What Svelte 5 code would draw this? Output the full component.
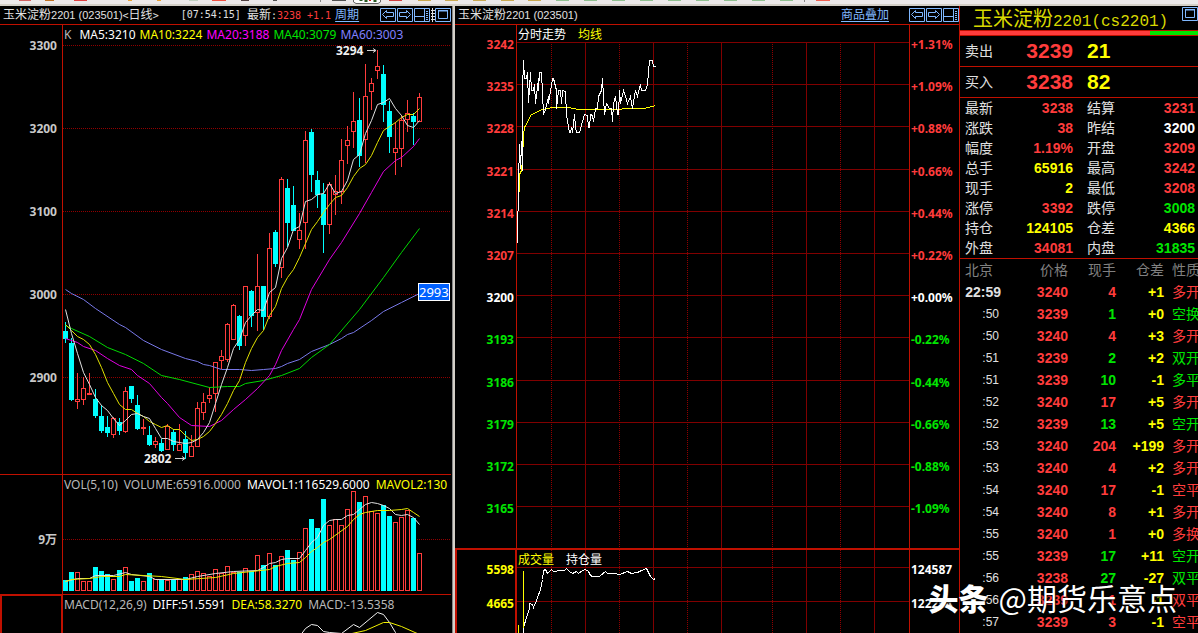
<script>
  const UP = 1
  const DOWN = 0

  // direction, high, body top, body bottom, low, volume top
  const candles = [
    [DOWN, 322, 331, 339, 343, 580], [DOWN, 338, 343, 400, 401, 572], [UP, 373, 399, 401, 409, 572],
    [UP, 377, 388, 399, 405, 581], [UP, 373, 393, 394, 395, 581], [DOWN, 389, 399, 416, 418, 567],
    [DOWN, 405, 416, 431, 433, 571], [DOWN, 416, 427, 433, 437, 574], [UP, 417, 418, 434, 438, 579],
    [DOWN, 418, 422, 431, 435, 570], [UP, 387, 391, 431, 433, 567], [DOWN, 386, 386, 399, 403, 581],
    [DOWN, 395, 405, 429, 430, 578], [UP, 419, 427, 428, 435, 581], [DOWN, 426, 435, 445, 446, 573],
    [UP, 437, 441, 444, 448, 579], [DOWN, 439, 443, 451, 452, 580], [UP, 424, 426, 449, 450, 580],
    [DOWN, 429, 432, 445, 451, 579], [UP, 424, 444, 450, 451, 579], [DOWN, 431, 439, 453, 459, 577],
    [UP, 435, 446, 456, 457, 574], [UP, 402, 408, 446, 447, 571], [UP, 393, 402, 412, 420, 573],
    [UP, 387, 395, 398, 403, 576], [UP, 362, 362, 393, 412, 569], [UP, 350, 356, 360, 369, 573],
    [UP, 323, 324, 359, 362, 566], [UP, 304, 305, 339, 340, 572], [DOWN, 315, 316, 346, 350, 572],
    [UP, 286, 286, 335, 346, 568], [DOWN, 290, 291, 316, 327, 571], [UP, 254, 286, 312, 331, 555],
    [DOWN, 286, 286, 317, 330, 565], [UP, 233, 248, 316, 319, 553], [DOWN, 230, 232, 264, 267, 565],
    [UP, 177, 179, 267, 278, 556], [DOWN, 179, 188, 223, 247, 550], [DOWN, 186, 205, 231, 231, 560],
    [UP, 213, 230, 239, 249, 552], [UP, 131, 140, 222, 249, 528], [DOWN, 129, 132, 175, 192, 519],
    [DOWN, 171, 180, 195, 208, 528], [DOWN, 183, 194, 225, 253, 499], [UP, 182, 184, 224, 234, 525],
    [UP, 175, 191, 194, 215, 519], [UP, 139, 160, 191, 204, 525], [UP, 126, 140, 145, 164, 509],
    [UP, 92, 121, 131, 148, 491], [DOWN, 98, 120, 156, 167, 502], [UP, 64, 96, 139, 163, 496],
    [UP, 78, 83, 91, 110, 511], [UP, 50, 66, 70, 79, 513], [DOWN, 65, 74, 105, 122, 505],
    [DOWN, 101, 111, 137, 153, 516], [UP, 122, 148, 152, 175, 522], [UP, 115, 120, 148, 167, 517],
    [UP, 100, 113, 119, 132, 510], [DOWN, 113, 116, 122, 145, 518], [UP, 93, 97, 121, 122, 553],
  ]

  const every = ys => ys.map((y, i) => [i, y])
  const line = pts => pts.map(([i, y]) => `${i * 6 + 2},${y}`).join(' ')

  const averages = [
    { color: '#7878e8', pts: [[0, 289], [1, 293], [3, 299], [5, 308], [9, 324], [10, 327], [13, 340], [16, 349], [20, 358], [22, 361], [23, 364], [24, 365], [26, 369], [29, 369], [31, 370], [33, 369], [35, 368], [36, 366], [37, 363], [39, 359], [41, 351], [44, 344], [46, 338], [47, 334], [48, 332], [51, 320], [53, 311], [56, 302], [59, 293]] },
    { color: '#00d800', pts: [[0, 325], [1, 328], [4, 336], [7, 347], [10, 354], [13, 363], [16, 375], [19, 379], [24, 387], [27, 386], [29, 386], [30, 383], [33, 380], [36, 375], [39, 368], [41, 357], [44, 344], [49, 309], [53, 277], [56, 252], [59, 228]] },
    { color: '#e000e0', pts: [[0, 338], [2, 342], [3, 346], [5, 350], [7, 358], [9, 365], [11, 369], [12, 375], [14, 383], [16, 397], [17, 403], [19, 417], [21, 425], [24, 426], [26, 420], [28, 409], [30, 399], [32, 388], [34, 375], [35, 364], [36, 350], [38, 329], [39, 319], [41, 289], [44, 259], [46, 242], [49, 213], [51, 192], [53, 171], [55, 160], [56, 157], [58, 146], [59, 138]] },
    { color: '#e0e000', pts: every([324, 330, 336, 339, 344, 354, 367, 382, 393, 404, 409, 409, 413, 416, 421, 424, 427, 425, 429, 429, 435, 440, 439, 436, 431, 423, 414, 403, 390, 380, 362, 348, 337, 330, 315, 306, 288, 277, 269, 257, 243, 229, 221, 212, 204, 197, 195, 187, 176, 168, 164, 155, 142, 130, 126, 122, 117, 114, 114, 108]) },
    { color: '#e0e0e0', pts: every([309, 333, 353, 372, 384, 397, 405, 410, 418, 425, 420, 414, 413, 416, 418, 428, 438, 438, 441, 442, 443, 442, 439, 432, 422, 403, 384, 367, 348, 339, 322, 315, 309, 310, 292, 287, 258, 247, 229, 226, 201, 199, 194, 193, 183, 193, 191, 180, 159, 154, 133, 120, 104, 102, 98, 108, 115, 125, 127, 120]) },
  ]

  const volAverages = [
    { color: '#e0e0e0', pts: [[0, 581], [2, 578], [4, 578], [5, 575], [8, 575], [10, 572], [11, 574], [14, 576], [15, 579], [20, 579], [22, 576], [25, 573], [28, 571], [32, 570], [33, 567], [34, 563], [35, 562], [36, 559], [37, 558], [39, 558], [40, 550], [41, 542], [42, 537], [43, 525], [44, 520], [45, 519], [46, 519], [47, 515], [48, 514], [49, 509], [50, 504], [51, 502], [52, 503], [53, 505], [54, 508], [55, 514], [56, 515], [57, 514], [58, 517], [59, 524]] },
    { color: '#e8e800', pts: [[0, 581], [1, 579], [4, 578], [6, 576], [9, 576], [10, 574], [13, 575], [16, 576], [20, 579], [25, 577], [28, 573], [31, 571], [34, 569], [35, 566], [37, 563], [39, 562], [40, 557], [41, 551], [42, 547], [43, 542], [44, 539], [47, 526], [48, 519], [49, 514], [50, 512], [52, 510], [54, 510], [56, 509], [57, 508], [58, 512], [59, 516]] },
  ]

  const macd = [
    { color: '#f0f0f0', pts: [[39, 636], [40, 628], [41, 624], [42, 625], [43, 631], [44, 632], [46, 633], [48, 624], [49, 627], [52, 612], [53, 614], [54, 622], [55, 632], [56, 638]] },
    { color: '#f0f000', pts: [[47, 634], [50, 630], [53, 622], [54, 622], [56, 626], [59, 634]] },
  ]

  const dayTicks = [[3300, 45], [3200, 128], [3100, 211], [3000, 294], [2900, 377]]

  const minuteTicks = [
    [3242, '+1.31%'], [3235, '+1.09%'], [3228, '+0.88%'], [3221, '+0.66%'],
    [3214, '+0.44%'], [3207, '+0.22%'], [3200, '+0.00%'], [3193, '-0.22%'],
    [3186, '-0.44%'], [3179, '-0.66%'], [3172, '-0.88%'], [3165, '-1.09%'],
  ]
  const side = price => price > 3200 ? 'r' : price < 3200 ? 'g' : 'w'
  const tickY = i => Math.round(i * 42.2)

  // x, dotted
  const hours = [[34, true], [68, false], [102, true], [136, false], [170, true], [204, false], [255, true], [289, false], [323, true], [357, false]]

  const price = '0,200 0,169 1,168 1,121 2,120 2,102 3,126 4,99 5,128 5,48 6,18 7,36 9,36 10,30 11,60 13,30 14,48 16,48 17,42 18,61 21,36 21,48 22,30 24,30 26,72 28,67 31,54 31,61 34,43 35,36 36,36 39,48 39,66 41,48 43,48 44,61 45,48 48,49 49,73 52,90 53,90 54,85 55,90 57,72 58,85 59,90 62,90 65,79 67,72 70,73 71,85 72,85 73,72 75,73 76,79 78,66 80,66 81,54 84,48 85,36 86,54 87,72 89,61 92,66 94,66 95,79 96,61 98,54 100,72 101,72 102,48 103,61 106,48 108,54 110,61 113,54 115,66 118,48 120,54 123,42 124,48 128,48 130,42 132,18 135,18 136,24 138,24'
  const mean = '1,168 2,133 3,129 4,129 5,116 6,93 7,85 10,80 13,73 18,70 25,67 35,65 51,65 61,67 101,67 108,66 126,66 135,64 138,63'
  const openInterest = '6,83 6,77 9,67 12,58 12,53 15,54 16,57 19,50 23,39 25,29 26,20 28,19 30,23 34,19 36,21 43,20 47,20 49,18 52,21 55,23 59,21 61,23 65,20 68,19 71,21 73,25 75,26 82,26 88,21 90,23 96,23 102,24 110,21 114,23 120,22 124,20 129,18 133,26 136,29 138,28'

  const quotes = [
    ['最新', '3238', 'r'], ['结算', '3231', 'r'],
    ['涨跌', '38', 'r'], ['昨结', '3200', 'w'],
    ['幅度', '1.19%', 'r'], ['开盘', '3209', 'r'],
    ['总手', '65916', 'y'], ['最高', '3242', 'r'],
    ['现手', '2', 'y'], ['最低', '3208', 'r'],
    ['涨停', '3392', 'r'], ['跌停', '3008', 'g'],
    ['持仓', '124105', 'y'], ['仓差', '4366', 'y'],
    ['外盘', '34081', 'r'], ['内盘', '31835', 'g'],
  ]

  const trades = [
    ['22:59', 3240, 4, '+1', '多开', 'r'],
    [':50', 3239, 1, '+0', '空换', 'g'],
    [':50', 3240, 4, '+3', '多开', 'r'],
    [':51', 3239, 2, '+2', '双开', 'g'],
    [':51', 3239, 10, '-1', '多平', 'g'],
    [':52', 3240, 17, '+5', '多开', 'r'],
    [':52', 3239, 13, '+5', '空开', 'g'],
    [':53', 3240, 204, '+199', '多开', 'r'],
    [':53', 3240, 4, '+2', '多开', 'r'],
    [':54', 3240, 17, '-1', '空平', 'r'],
    [':54', 3240, 8, '+1', '多开', 'r'],
    [':55', 3240, 1, '+0', '多换', 'r'],
    [':55', 3239, 17, '+11', '空开', 'g'],
    [':56', 3238, 27, '-27', '双平', 'g'],
    [':56', 3239, 1, '-1', '双平', 'r'],
    [':57', 3239, 3, '-1', '空平', 'r'],
  ]

  const sellShare = 80

  // what shows of the toolbar icons: x, width, color
  const stubs = [
    [19, 12, '#d06060'], [45, 9, '#c07020'], [74, 13, '#e04040'], [128, 4, '#e8a030'], [157, 4, '#e8a030'], [189, 9, '#c0d0c0'],
    [212, 14, '#f05040'], [241, 8, '#504040'], [273, 4, '#505050'], [332, 14, '#505050'], [389, 13, '#d04040'], [418, 13, '#c8a850'], [445, 13, '#c8a850'],
    [473, 13, '#c8a850'], [501, 13, '#c8a850'], [528, 13, '#c8a850'], [556, 13, '#90c090'], [584, 13, '#90c090'], [612, 13, '#90c090'],
    [640, 13, '#90c090'], [668, 13, '#90c090'], [696, 13, '#90c090'], [724, 13, '#90c090'], [752, 13, '#90c090'], [780, 13, '#90c090'], [816, 14, '#f06050'],
  ]
</script>

{#snippet icon(kind, label)}
  <button class="icon" aria-label={label}>
    <svg width="16" height="14" viewBox="0 0 16 14" fill="none" stroke="#80b8ff">
      <path d="M.5 .5H15.5V13.5H.5Z" />
      {#if kind === 'left'}
        <path d="M2.5 6.5L6.5 2.5V4.5H13.5V8.5H6.5V10.5Z" />
      {:else if kind === 'right'}
        <path d="M13.5 6.5L9.5 2.5V4.5H2.5V8.5H9.5V10.5Z" />
      {:else if kind === 'split'}
        <path d="M1 8.5H10M10.5 1V13M12 3.5H14M12 5.5H14M12 7.5H14M12 9.5H14M12 11.5H14" />
      {:else}
        <path d="M3.5 3H12.5V10.5H3.5ZM3 2.5H13" />
      {/if}
    </svg>
  </button>
{/snippet}

<div class="app">
  <svg class="strip" width="100%" height="6">
    {#each stubs as [x, w, color]}
      <rect {x} y="0" width={w} height="1" fill={color} />
    {/each}
    <rect x="320" y="0" width="1" height="2" fill="#888" />
    <path d="M353.500 0V2L356 3.500H378L380.500 2V0" fill="#fff" stroke="#666" />
    <path d="M361 0V1M366 0V2M375 0V2" stroke="#2a5a20" stroke-width="3" />
    <path d="M370 0V1" stroke="#d02020" stroke-width="2" />
    <rect x="804" y="0" width="1" height="2" fill="#888" />
  </svg>

  <main>
    <section class="day">
      <header>
        <h2>玉米淀粉<span class="code">2201 (023501)</span><span class="en">&lt;</span>日线<span class="en">&gt;</span></h2>
        <span class="clock">[07:54:15]</span>
        <span>最新<span class="en">:<span class="r">3238 +1.1</span></span></span>
        <a href="#period">周期</a>
        <nav>
          {@render icon('left', '上一个')}
          {@render icon('right', '下一个')}
          {@render icon('split', '分栏')}
          <svg class="mark" width="4" height="14" stroke="#e0e0e0"><path d="M0 2.500H4M0 5.500H4M0 8.500H4M0 11.500H4M1.500 0V14" /></svg>
          {@render icon('max', '最大化')}
        </nav>
      </header>

      <div class="pane">
        <svg class="axis" height="449">
          {#each dayTicks as [label, y]}
            <text x="57" y={y - 20} text-anchor="end">{label}</text>
          {/each}
        </svg>
        <div class="plot">
          <p class="legend num tight">
            <span class="dim">K</span>
            <span class="w lead">MA5:3210</span>
            <span class="y">MA10:3224</span>
            <span class="m">MA20:3188</span>
            <span class="g">MA40:3079</span>
            <span class="b">MA60:3003</span>
          </p>
          <svg width="100%" height="449">
            <g transform="translate(0 -25)" shape-rendering="crispEdges">
              {#each dayTicks as [, y]}
                <line class="dots" x1="0" x2="100%" y1={y + 0.5} y2={y + 0.5} />
              {/each}
              {#each candles as [up, high, top, bottom, low], i}
                <rect class:up class="stick" x={i * 6 + 2} y={high} width="1" height={low - high} />
                {#if up}
                  <rect class="hollow" x={i * 6 + 0.5} y={top + 0.5} width="4" height={bottom - top} />
                {:else}
                  <rect class="stick" x={i * 6} y={top} width="5" height={bottom - top} />
                {/if}
              {/each}
            </g>
            <g transform="translate(0.5 -24.5)">
              {#each averages as a}
                <polyline points={line(a.pts)} stroke={a.color} />
              {/each}
            </g>
            <g class="note">
              <text x="273" y="30">3294</text>
              <path d="M304 25.500H313M310 23.500L313 25.500L310 27.500" />
              <text x="81" y="438">2802</text>
              <path d="M112 433.500H122M119 431.500L122 433.500L119 435.500" />
            </g>
            <rect x="355.500" y="258.500" width="31" height="17" fill="#0060ff" stroke="#fff" />
            <text class="cursor" x="356" y="272">2993</text>
          </svg>
        </div>
      </div>

      <div class="pane">
        <svg class="axis" height="119">
          <text x="57" y="69" text-anchor="end">9万</text>
        </svg>
        <div class="plot">
          <p class="legend num">
            <span class="dim">VOL(5,10)</span>
            <span class="dim">VOLUME:65916.0000</span>
            <span class="w">MAVOL1:116529.6000</span>
            <span class="y">MAVOL2:130</span>
          </p>
          <svg width="100%" height="119">
            <g transform="translate(0 -475)" shape-rendering="crispEdges">
              <line class="dots" x1="0" x2="100%" y1="539.500" y2="539.500" />
              {#each candles as [up, , , , , top], i}
                {#if up}
                  <rect class="hollow" x={i * 6 + 0.5} y={top + 0.5} width="4" height={590 - top} />
                {:else}
                  <rect class="stick" x={i * 6} y={top} width="5" height={591 - top} />
                {/if}
              {/each}
            </g>
            <g transform="translate(0.5 -474.5)">
              {#each volAverages as a}
                <polyline points={line(a.pts)} stroke={a.color} />
              {/each}
            </g>
          </svg>
        </div>
      </div>

      <div class="pane last">
        <div class="axis boxed"></div>
        <div class="plot">
          <p class="legend num">
            <span class="dim">MACD(12,26,9)</span>
            <span class="w">DIFF:51.5591</span>
            <span class="y">DEA:58.3270</span>
            <span class="dim">MACD:-13.5358</span>
          </p>
          <svg width="100%" height="100%">
            <g transform="translate(0.5 -594.5)">
              {#each macd as a}
                <polyline points={line(a.pts)} stroke={a.color} />
              {/each}
            </g>
          </svg>
        </div>
      </div>
    </section>

    <section class="minute">
      <header>
        <h2>玉米淀粉<span class="code">2201 (023501)</span></h2>
        <nav>
          <a href="#overlay">商品叠加</a>
          {@render icon('left', '上一个')}
          {@render icon('right', '下一个')}
          {@render icon('split', '分栏')}
        </nav>
      </header>

      <div class="pane">
        <svg class="axis" height="523">
          {#each minuteTicks as [label], i}
            <text class={side(label)} x="59" y={tickY(i) + 24} text-anchor="end">{label}</text>
          {/each}
        </svg>
        <div class="plot">
          <p class="legend wide"><span class="w">分时走势</span><span class="y">均线</span></p>
          <svg class="under" width="100%" height="506">
            <g shape-rendering="crispEdges">
              {#each minuteTicks as _, i}
                <line class="grid" x1="0" x2="100%" y1={tickY(i) + 0.5} y2={tickY(i) + 0.5} />
              {/each}
              {#each hours as [x, dotted]}
                <line class={dotted ? 'dots' : 'grid'} x1={x + 0.5} x2={x + 0.5} y1="0" y2="100%" />
              {/each}
            </g>
            <g transform="translate(0.5 0.5)" shape-rendering="crispEdges">
              <polyline points={mean} stroke="#ffff00" />
              <polyline points={price} stroke="#ffffff" />
            </g>
          </svg>
        </div>
        <svg class="scale" height="523">
          {#each minuteTicks as [label, pct], i}
            <text class={side(label)} x="1" y={tickY(i) + 24}>{pct}</text>
          {/each}
        </svg>
      </div>

      <div class="pane last thick">
        <svg class="axis boxed">
          <text class="y" x="57" y="24" text-anchor="end">5598</text>
          <text class="y" x="57" y="58" text-anchor="end">4665</text>
        </svg>
        <div class="plot">
          <p class="legend wide"><span class="y">成交量</span><span class="w">持仓量</span></p>
          <svg width="100%" height="100%">
            <g shape-rendering="crispEdges">
              <line class="grid" x1="0" x2="100%" y1="17.500" y2="17.500" />
              <line class="grid" x1="0" x2="100%" y1="51.500" y2="51.500" />
              {#each hours as [x, dotted]}
                <line class={dotted ? 'dots' : 'grid'} x1={x + 0.5} x2={x + 0.5} y1="0" y2="100%" />
              {/each}
            </g>
            <g transform="translate(0.5 0.5)" shape-rendering="crispEdges">
              <polyline points={openInterest} stroke="#ffffff" />
              <path d="M1 74V100M6 20V77" stroke="#ffff00" />
            </g>
          </svg>
        </div>
        <svg class="scale">
          <text class="w" x="1" y="24">124587</text>
          <text class="w" x="1" y="58">122254</text>
        </svg>
      </div>
    </section>

    <aside>
      <div class="title">
        <h1>玉米淀粉<span>2201(cs2201)</span></h1>
        {@render icon('max', '最大化')}
      </div>
      <div class="ratio"><div style="width: {sellShare}%"></div></div>
      <div class="order"><span>卖出</span><b class="r">3239</b><b class="y">21</b></div>
      <div class="order"><span>买入</span><b class="r">3238</b><b class="y">82</b></div>
      <dl>
        {#each quotes as [name, value, color]}
          <div><dt>{name}</dt><dd class={color}>{value}</dd></div>
        {/each}
      </dl>
      <table>
        <thead>
          <tr><th class="time">北京</th><th class="price">价格</th><th class="hand">现手</th><th class="hand">仓差</th><th class="kind">性质</th></tr>
        </thead>
        <tbody>
          {#each trades as [time, price, hand, diff, kind, color], i}
            <tr>
              <td class="time" class:full={i === 0}>{time}</td>
              <td class="r">{price}</td>
              <td class={color}>{hand}</td>
              <td class="y">{diff}</td>
              <td class="kind {color}">{kind}</td>
            </tr>
          {/each}
        </tbody>
      </table>
    </aside>
  </main>

  <div class="watermark"><b>头条</b><span>@期货乐意点</span></div>
</div>

<style>
  :global(body) {
    background: #000;
  }

  .app {
    position: relative;
    display: flex;
    flex-direction: column;
    height: 100vh;
    overflow: hidden;
    color: #e0e0e0;
    font: 12px/18px "Liberation Sans", "Noto Sans CJK SC", sans-serif;
  }

  .strip {
    display: block;
    flex: none;
    background: #ece9ea;
    border-bottom: 2px solid #d4d0c8;
    box-sizing: border-box;
  }

  main {
    flex: 1;
    min-height: 0;
    display: grid;
    grid-template-columns: minmax(0, 455fr) minmax(0, 505fr) 238px;
  }

  section {
    display: flex;
    flex-direction: column;
    min-height: 0;
    box-sizing: border-box;
  }

  .day {
    padding-right: 2px;
    border-right: 2px solid #d4d0c8;
    box-shadow: inset -1px 0 #888;
  }

  .minute {
    border-right: 1px solid #c01000;
  }

  header {
    display: flex;
    align-items: center;
    height: 18px;
    padding-left: 3px;
    border-bottom: 1px solid #c01000;
    white-space: nowrap;
  }

  h1, h2, p, dl, dd {
    margin: 0;
    font-weight: normal;
  }

  h2 {
    font-size: 12px;
  }

  .code {
    font-size: 11px;
  }

  .en, .clock {
    font-family: "DejaVu Sans Mono", monospace;
    font-size: 10px;
  }

  .clock {
    margin: 0 6px 0 22px;
  }

  a {
    color: #80b8ff;
    text-underline-offset: 2px;
  }

  header > a {
    margin-left: 4px;
  }

  nav {
    display: flex;
    align-items: center;
    gap: 1px;
    margin-left: auto;
  }

  nav a {
    margin-right: 19px;
  }

  .icon {
    display: block;
    padding: 0;
    border: 0;
    background: none;
  }

  .icon svg, .mark {
    display: block;
  }

  .mark {
    margin-right: -1px;
  }

  .pane {
    display: flex;
    flex: none;
  }

  .day .pane:not(.last) {
    border-bottom: 1px solid #c01000;
  }

  .last {
    flex: 1;
    min-height: 0;
  }

  .thick {
    border-top: 2px solid #c01000;
  }

  .axis {
    flex: none;
    width: 63px;
    box-sizing: border-box;
    border-right: 1px solid #c01000;
    fill: #c8c8c8;
  }

  .minute .axis {
    width: 62px;
  }

  .axis.boxed {
    border: 2px solid #c01000;
    border-width: 1px 2px 0 2px;
  }

  .thick .axis.boxed {
    border-top: 0;
  }

  .scale {
    flex: none;
    width: 50px;
    box-sizing: border-box;
    border-left: 1px solid #c01000;
  }

  .axis text, .scale text, .note text {
    font: bold 12px "Noto Sans", "Noto Sans CJK SC", sans-serif;
  }

  .plot {
    position: relative;
    flex: 1;
    min-width: 0;
    overflow: hidden;
  }

  .plot svg {
    display: block;
  }

  .plot .under {
    margin-top: 17px;
  }

  .legend {
    position: absolute;
    top: 1px;
    left: 1px;
    display: flex;
    gap: 6px;
    white-space: nowrap;
  }

  .tight {
    gap: 4px;
  }

  .wide {
    gap: 12px;
  }

  .lead {
    margin-left: 4px;
  }

  .num {
    font-family: "Noto Sans", sans-serif;
  }

  polyline {
    fill: none;
  }

  .grid {
    stroke: #800000;
  }

  .dots {
    stroke: #900000;
    stroke-dasharray: 1 1;
  }

  .stick {
    fill: #00ffff;
  }

  .stick.up {
    fill: #ff3c3c;
  }

  .hollow {
    fill: #000;
    stroke: #ff3c3c;
  }

  .note {
    fill: #f0f0f0;
  }

  .note path {
    fill: none;
    stroke: #d0d0d0;
  }

  .cursor {
    fill: #fff;
    font: 13px "Noto Sans", sans-serif;
  }

  .r { color: #ff3c3c; fill: #ff3c3c; }
  .g { color: #00e600; fill: #00e600; }
  .y { color: #ffff00; fill: #ffff00; }
  .w { color: #ffffff; fill: #ffffff; }
  .m { color: #ff00ff; }
  .b { color: #8080ff; }
  .dim { color: #b8b8b8; }

  aside {
    overflow: hidden;
    font-size: 14px;
    white-space: nowrap;
  }

  .title {
    display: flex;
    justify-content: space-between;
    height: 24px;
    padding-left: 13px;
    border-bottom: 1px solid #c01000;
  }

  h1 {
    color: #d8d800;
    font: 20px/24px "Noto Sans CJK SC", sans-serif;
  }

  h1 span {
    font: 16px "Liberation Mono", monospace;
  }

  .title .icon {
    align-self: flex-start;
    margin-top: 1px;
  }

  .ratio {
    height: 4px;
    background: #00e600;
    border-bottom: 1px solid #c01000;
  }

  .ratio div {
    height: 100%;
    background: #ff3c3c;
  }

  .order {
    display: grid;
    grid-template-columns: 28px 80px 1fr;
    align-items: center;
    height: 30px;
    padding-left: 5px;
    border-bottom: 1px solid #c01000;
  }

  .order b {
    font-size: 21px;
    text-align: right;
  }

  .order b:last-child {
    padding-left: 14px;
    text-align: left;
  }

  dl {
    display: grid;
    grid-template-columns: 108px 108px;
    column-gap: 14px;
    padding-left: 5px;
    border-bottom: 1px solid #c01000;
  }

  dl div {
    display: flex;
    justify-content: space-between;
    line-height: 20px;
  }

  dd {
    font-weight: bold;
  }

  table {
    width: 100%;
    table-layout: fixed;
    border-collapse: collapse;
  }

  th, td {
    height: 22px;
    padding: 0;
    line-height: 22px;
    text-align: right;
  }

  th {
    color: #808080;
    font-weight: normal;
  }

  td {
    font-weight: bold;
  }

  th.time {
    width: 41px;
    padding-left: 5px;
    box-sizing: border-box;
    text-align: left;
  }

  th.price {
    width: 67px;
  }

  th.hand {
    width: 48px;
  }

  td.time {
    padding-right: 2px;
    font-size: 12px;
    font-weight: normal;
  }

  td.full {
    padding: 0;
    font-size: 14px;
    font-weight: bold;
  }

  .kind {
    padding-left: 8px;
    font-weight: normal;
    text-align: left;
  }

  .watermark {
    position: absolute;
    right: 21px;
    bottom: 16px;
    display: flex;
    gap: 10px;
    color: #fff;
    font: 30px/40px "Noto Sans CJK SC", sans-serif;
    text-shadow: 1px 1px 2px #000;
    pointer-events: none;
  }

  .watermark b {
    font-weight: 900;
  }
</style>
